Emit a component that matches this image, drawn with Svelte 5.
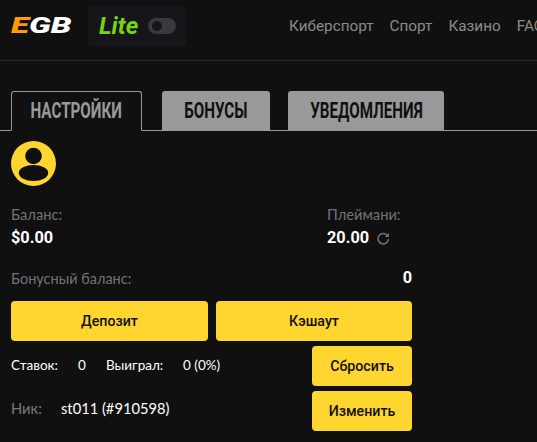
<script>
  const nav = ['Киберспорт', 'Спорт', 'Казино', 'FAQ'];
  const tabs = ['НАСТРОЙКИ', 'БОНУСЫ', 'УВЕДОМЛЕНИЯ'];
</script>

<div class="page">
  <header class="header">
    <div class="logo"><div class="logo-inner"><span class="e">E</span>GB</div></div>
    <div class="lite">
      <span class="lite-text">Lite</span>
      <span class="toggle"><span class="knob"></span></span>
    </div>
    <nav class="nav">
      {#each nav as item}<span>{item}</span>{/each}
    </nav>
  </header>

  <div class="tabs">
    {#each tabs as tab, i}
      <div class="tab tab{i}" class:active={i === 0}><span>{tab}</span></div>
    {/each}
  </div>

  <main class="content">
    <svg class="avatar" viewBox="0 0 45 45" width="45" height="45">
      <circle cx="22.5" cy="22.5" r="22.5" fill="#ffd530" />
      <circle cx="22.5" cy="15" r="8.3" fill="#101010" />
      <ellipse cx="22.5" cy="32" rx="14.7" ry="8" fill="#101010" />
    </svg>

    <div class="balances">
      <div class="col first">
        <div class="label">Баланс:</div>
        <div class="value">$0.00</div>
      </div>
      <div class="col">
        <div class="label">Плеймани:</div>
        <div class="value">20.00
          <svg class="refresh" viewBox="1 0.5 12.5 12.5" width="13" height="13" fill="none">
            <path d="M11.2 4.2A5 5 0 1 0 12 7.2" stroke="#777" stroke-width="1.4" />
            <path d="M12.4 1.4v4h-4z" fill="#777" />
          </svg>
        </div>
      </div>
    </div>

    <div class="bonus">
      <span class="label bonus-label">Бонусный баланс:</span>
      <span class="value">0</span>
    </div>

    <div class="actions">
      <button class="btn">Депозит</button>
      <button class="btn">Кэшаут</button>
    </div>

    <div class="row stats">
      <div class="info">
        <span class="w47">Ставок:</span><span class="w48">0</span>
        <span class="w77">Выиграл:</span><span>0 (0%)</span>
      </div>
      <button class="btn small">Сбросить</button>
    </div>

    <div class="row nick">
      <div class="info">
        <span class="w50 muted">Ник:</span><span class="nickname">st011 (#910598)</span>
      </div>
      <button class="btn small">Изменить</button>
    </div>
  </main>
</div>

<style>
  :global(body) {
    margin: 0;
    background: #101010;
  }
  .page {
    width: 537px;
    height: 442px;
    overflow: hidden;
    background: #101010;
    font-family: Lato, sans-serif;
  }
  .header {
    display: flex;
    align-items: flex-start;
    height: 60px;
    border-bottom: 1px solid #2b2b2b;
    padding-left: 11px;
    white-space: nowrap;
  }
  .logo {
    flex: 0 0 60px;
    margin-top: 13px;
  }
  .logo-inner {
    font: italic 900 22px/26px Roboto, sans-serif;
    color: #fff;
    transform: scaleX(1.5);
    transform-origin: left center;
  }
  .e {
    color: #ff9c00;
  }
  .lite {
    flex: 0 0 98px;
    display: flex;
    align-items: center;
    height: 40px;
    box-sizing: border-box;
    margin: 6px 0 0 17px;
    padding-left: 11px;
    background: #16161a;
    border-radius: 4px;
  }
  .lite-text {
    font: italic 700 24px/28px Roboto, sans-serif;
    color: #76d411;
    width: 49px;
  }
  .toggle {
    display: flex;
    align-items: center;
    width: 28px;
    height: 16px;
    border-radius: 8px;
    background: #3a3a3e;
    padding-left: 4px;
    box-sizing: border-box;
  }
  .knob {
    width: 10px;
    height: 10px;
    border-radius: 50%;
    background: #16161a;
  }
  .nav {
    flex: none;
    display: flex;
    gap: 16px;
    margin: 17px 0 0 103px;
    font: 400 15.3px/18px Roboto, sans-serif;
    color: #8b8b8b;
  }
  .tabs {
    display: flex;
    align-items: flex-end;
    height: 70px;
    box-sizing: border-box;
    border-bottom: 1px solid #999;
    padding-left: 11px;
  }
  .tab {
    box-sizing: border-box;
    height: 40px;
    margin-bottom: -1px;
    display: flex;
    align-items: center;
    justify-content: center;
    background: #999;
    border-radius: 3px 3px 0 0;
    color: #101010;
    font: 700 22px/24px Roboto, sans-serif;
    white-space: nowrap;
  }
  .tab span {
    display: inline-block;
    transform: scaleX(0.69);
  }
  .tab.active {
    background: #101010;
    color: #999;
    border: 1px solid #999;
    border-bottom-color: #101010;
  }
  .tab0 {
    width: 131px;
    margin-right: 20px;
  }
  .tab1 {
    width: 108px;
    margin-right: 18px;
  }
  .tab2 {
    width: 156px;
  }
  .content {
    width: 401px;
    margin-left: 11px;
    padding-top: 10px;
  }
  .avatar {
    display: block;
  }
  .balances {
    display: flex;
    margin-top: 20px;
  }
  .col {
    flex: 1;
  }
  .col.first {
    flex: 0 0 316px;
  }
  .label {
    font: 400 14.7px/17px Lato, sans-serif;
    color: #6f7378;
  }
  .bonus-label {
    font-size: 14.5px;
  }
  .value {
    display: flex;
    align-items: center;
    gap: 8px;
    margin-top: 5px;
    font: 700 16.3px/20px Roboto, sans-serif;
    color: #fff;
  }
  .refresh {
    margin-top: 1px;
  }
  .bonus {
    display: flex;
    justify-content: space-between;
    align-items: center;
    margin-top: 19px;
    height: 22px;
  }
  .bonus .value {
    margin-top: -1px;
  }
  .actions {
    display: grid;
    grid-template-columns: 197px 196px;
    gap: 8px;
    margin-top: 12px;
  }
  .btn {
    height: 40px;
    border: 0;
    padding: 0;
    border-radius: 4px;
    background: #ffd530;
    color: #111;
    font: 500 14.2px/16px Roboto, sans-serif;
  }
  .btn.small {
    width: 100px;
  }
  .row {
    display: flex;
    justify-content: space-between;
    align-items: center;
    margin-top: 5px;
  }
  .info {
    display: flex;
    font: 400 13.5px/16px Lato, sans-serif;
    color: #fff;
  }
  .stats .info {
    margin-top: -2px;
  }
  .nick .info {
    margin-top: -7px;
    font-size: 14.7px;
  }
  .w47 {
    width: 67px;
  }
  .w48 {
    width: 28px;
  }
  .w77 {
    width: 77px;
  }
  .w50 {
    width: 50px;
  }
  .muted {
    color: #7a7a7a;
  }
</style>
